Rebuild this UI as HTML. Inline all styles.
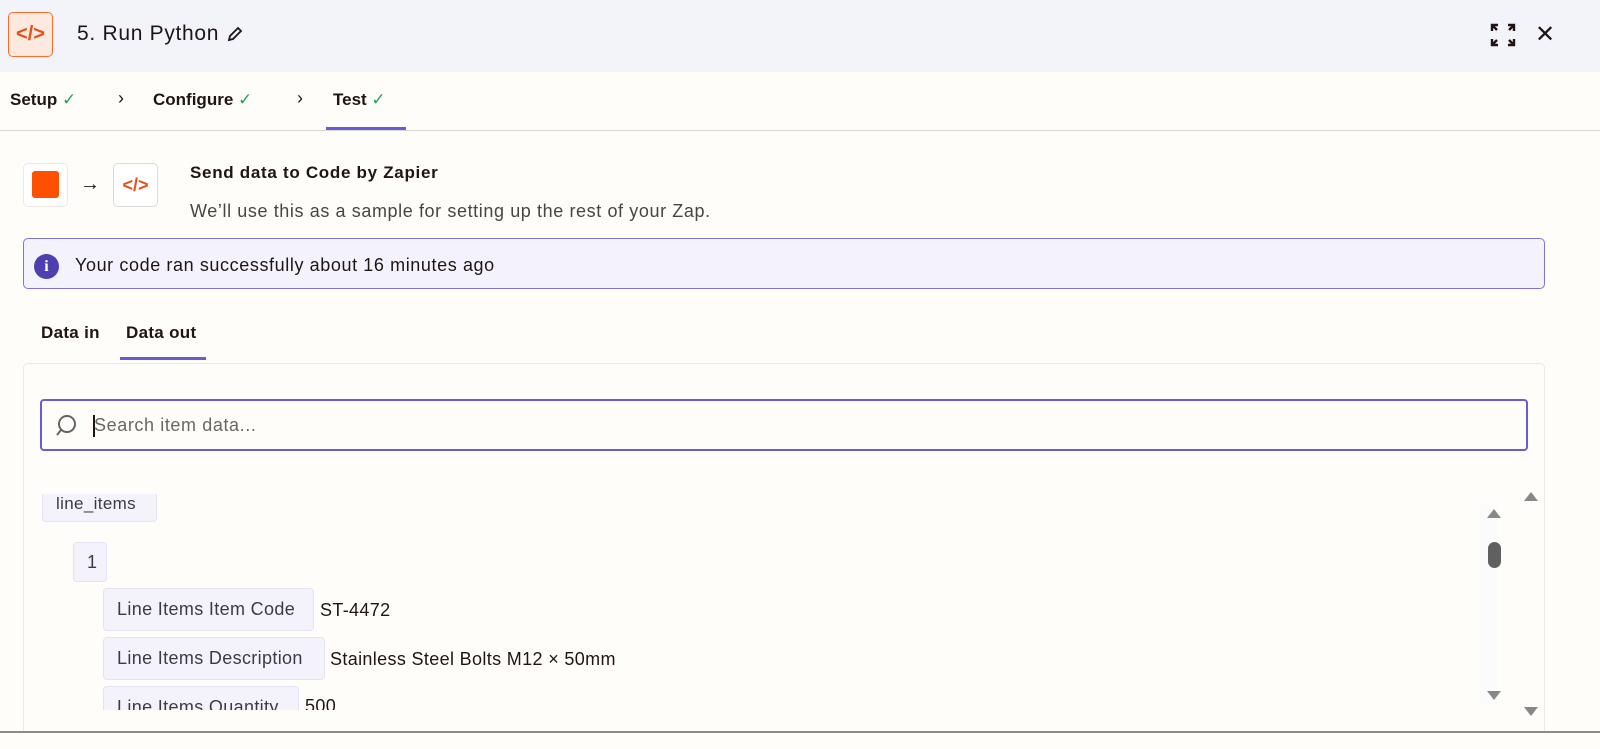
<!DOCTYPE html>
<html><head><meta charset="utf-8"><style>
*{box-sizing:border-box;margin:0;padding:0}
body{width:1600px;height:749px;overflow:hidden;background:#fffdf9;font-family:"Liberation Sans",sans-serif;color:#201515;position:relative}
.abs{position:absolute}
.hdr{left:0;top:0;width:1600px;height:72px;background:#f3f3fa}
.reg{font-size:18px;letter-spacing:.6px}
.pill{position:absolute;background:#f4f3fb;border:1px solid #e4e2f4;border-radius:4px;font-size:18px;letter-spacing:.35px;color:#3d3a44;padding:0 13px;display:flex;align-items:center}
.val{position:absolute;font-size:18px;letter-spacing:.35px;color:#201515}
.tri{position:absolute;width:0;height:0;border-left:7px solid transparent;border-right:7px solid transparent}
</style></head><body>
<div class="abs hdr"></div>
<div class="abs" style="left:8px;top:12px;width:45px;height:45px;border:1.5px solid #ff6b2b;border-radius:5px;background:#fde9dd;color:#e5501a;font-size:20px;font-weight:bold;display:flex;align-items:center;justify-content:center">&lt;/&gt;</div>
<div class="abs" style="left:77px;top:22px;font-size:21px;letter-spacing:.7px">5. Run Python</div>
<svg class="abs" style="left:226px;top:25px" width="18" height="18" viewBox="0 0 18 18"><path d="M3 15l1-4 8-8 3 3-8 8z" fill="none" stroke="#201515" stroke-width="1.8"/></svg>
<svg class="abs" style="left:1490px;top:23px" width="26" height="24" viewBox="0 0 26 24"><g stroke="#201515" stroke-width="2.4" fill="none"><path d="M2 8V2h6M2 2l5 5M24 8V2h-6M24 2l-5 5M2 16v6h6M2 22l5-5M24 16v6h-6M24 22l-5-5"/></g></svg>
<div class="abs" style="left:1535px;top:20px;font-size:24px">✕</div>

<div class="abs" style="left:10px;top:90px;font-size:17px;font-weight:bold">Setup <span style="color:#2f9e57;font-weight:normal">✓</span></div>
<div class="abs" style="left:118px;top:88px;font-size:18px">›</div>
<div class="abs" style="left:153px;top:90px;font-size:17px;font-weight:bold">Configure <span style="color:#2f9e57;font-weight:normal">✓</span></div>
<div class="abs" style="left:297px;top:88px;font-size:18px">›</div>
<div class="abs" style="left:333px;top:90px;font-size:17px;font-weight:bold">Test <span style="color:#2f9e57;font-weight:normal">✓</span></div>
<div class="abs" style="left:326px;top:127px;width:80px;height:3px;background:#6a5cd6"></div>
<div class="abs" style="left:0;top:130px;width:1600px;height:1px;background:#d8d6d2"></div>

<div class="abs" style="left:23px;top:163px;width:45px;height:44px;border:1px solid #ece9e4;border-radius:5px;background:#fff"></div>
<div class="abs" style="left:32px;top:171px;width:27px;height:27px;background:#ff4f00;border-radius:3px"></div>
<div class="abs" style="left:80px;top:173px;font-size:20px">→</div>
<div class="abs" style="left:113px;top:163px;width:45px;height:44px;border:1px solid #dcd9d4;border-radius:5px;background:#fff;color:#e5501a;font-size:18px;font-weight:bold;display:flex;align-items:center;justify-content:center">&lt;/&gt;</div>
<div class="abs" style="left:190px;top:163px;font-size:17px;font-weight:bold;letter-spacing:.7px">Send data to Code by Zapier</div>
<div class="abs reg" style="left:190px;top:201px;color:#4a4542">We’ll use this as a sample for setting up the rest of your Zap.</div>

<div class="abs" style="left:23px;top:238px;width:1522px;height:51px;border:1.5px solid #7f74dc;border-radius:5px;background:#f4f3fd"></div>
<div class="abs" style="left:34px;top:254px;width:25px;height:25px;border-radius:50%;background:#4d3fb0;color:#fff;font-weight:bold;font-size:16px;text-align:center;line-height:25px;font-family:'Liberation Serif',serif">i</div>
<div class="abs reg" style="left:75px;top:255px">Your code ran successfully about 16 minutes ago</div>

<div class="abs" style="left:41px;top:323px;font-size:17px;font-weight:bold;letter-spacing:.3px">Data in</div>
<div class="abs" style="left:126px;top:323px;font-size:17px;font-weight:bold;letter-spacing:.3px">Data out</div>
<div class="abs" style="left:120px;top:357px;width:86px;height:3px;background:#6a5cd6"></div>

<div class="abs" style="left:23px;top:363px;width:1522px;height:380px;border:1px solid #ebe9e4;border-radius:5px;background:#fffdf9"></div>
<div class="abs" style="left:40px;top:399px;width:1488px;height:52px;border:2.5px solid #6a5cd6;border-radius:4px;background:#fffdf9"></div>
<svg class="abs" style="left:54px;top:413px" width="24" height="26" viewBox="0 0 24 26"><circle cx="13" cy="11" r="8" fill="none" stroke="#666" stroke-width="2"/><path d="M7 17l-4 5" stroke="#666" stroke-width="2"/></svg>
<div class="abs" style="left:93px;top:415px;width:1.5px;height:22px;background:#201515"></div>
<div class="abs reg" style="left:94px;top:415px;color:#6b6664">Search item data...</div>

<div class="abs" style="left:30px;top:494px;width:1450px;height:216px;overflow:hidden">
<div class="pill" style="left:12px;top:-8px;height:36px;width:115px;font-size:17px">line_items</div>
<div class="pill" style="left:43px;top:48px;height:40px;width:34px">1</div>
<div class="pill" style="left:73px;top:94px;height:43px;width:211px">Line Items Item Code</div>
<div class="val" style="left:290px;top:106px">ST-4472</div>
<div class="pill" style="left:73px;top:143px;height:43px;width:222px">Line Items Description</div>
<div class="val" style="left:300px;top:155px">Stainless Steel Bolts M12 × 50mm</div>
<div class="pill" style="left:73px;top:192px;height:43px;width:196px">Line Items Quantity</div>
<div class="val" style="left:275px;top:202px">500</div>
</div>

<div class="abs" style="left:1480px;top:505px;width:17px;height:200px;background:#fbfbfb"></div>
<div class="tri" style="left:1487px;top:509px;border-bottom:9px solid #888"></div>
<div class="abs" style="left:1488px;top:542px;width:13px;height:26px;border-radius:7px;background:#606060"></div>
<div class="tri" style="left:1487px;top:691px;border-top:9px solid #888"></div>
<div class="tri" style="left:1524px;top:492px;border-bottom:9px solid #888"></div>
<div class="tri" style="left:1524px;top:707px;border-top:9px solid #888"></div>
<div class="abs" style="left:0;top:731px;width:1600px;height:2px;background:#8a8a8a"></div>
<div class="abs" style="left:0;top:733px;width:1600px;height:16px;background:#fffdf9"></div>
</body></html>
